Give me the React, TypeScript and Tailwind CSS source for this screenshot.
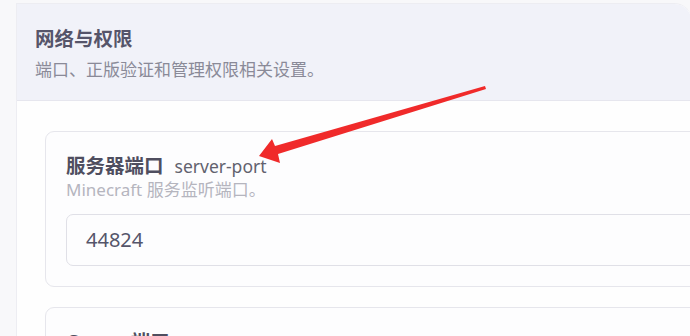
const FONT = { fontFamily: '"Noto Sans", "Noto Sans CJK SC", sans-serif' };

const Field = ({ label, keyName, desc, value }: { label: string; keyName: string; desc: string; value: string }) => {
  return (
    <div className="w-[680px] rounded-[9px] border border-[#e6e6ec] bg-[#fdfdfe] pl-[20px] pt-[21px] pb-[20px]">
      <div className="flex items-baseline gap-[11px] leading-[26px]">
        <span className="text-[19.5px] font-bold text-[#4f4e5f]">{label}</span>
        <span className="text-[17.5px] text-[#62626e]">{keyName}</span>
      </div>
      <div className="text-[17px] leading-[22px] text-[#b5b5be]">{desc}</div>
      <div className="mt-[13px] flex h-[52px] items-center rounded-[7px] border border-[#e0e0e7] bg-[#fdfdfe] px-[19px] text-[20px] text-[#55556a]">
        {value}
      </div>
    </div>
  );
};

export default function App() {
  return (
    <div className="relative h-[336px] w-[690px] overflow-hidden bg-[#f8f8fa] pt-[3px]" style={FONT}>
      <div className="ml-[16px] w-[676px] rounded-tr-[18px] border-l border-t border-[#ededf2] bg-[#fefefe]">
        {/* header */}
        <div className="rounded-tr-[18px] border-b border-[#e6e6ee] bg-[#f1f2f9] pl-[18px] pt-[22px] pb-[18px]">
          <h2 className="text-[19.5px] font-bold leading-[26px] text-[#56556a]">网络与权限</h2>
          <p className="mt-[6px] text-[17px] leading-[24px] text-[#8a8a98]">端口、正版验证和管理权限相关设置。</p>
        </div>

        {/* fields */}
        <div className="flex flex-col gap-[20px] pl-[28px] pt-[30px]">
          <Field label="服务器端口" keyName="server-port" desc="Minecraft 服务监听端口。" value="44824" />
          <Field label="Query 端口" keyName="query.port" desc="Query 协议监听端口。" value="44824" />
        </div>
      </div>

      {/* annotation arrow */}
      <svg className="pointer-events-none absolute left-0 top-0" width="690" height="336" viewBox="0 0 690 336">
        <polygon
          points="259,156 272,139 275,146 485,86 486,89 278,154 280,163"
          fill="#f02a2a"
        />
      </svg>
    </div>
  );
}
